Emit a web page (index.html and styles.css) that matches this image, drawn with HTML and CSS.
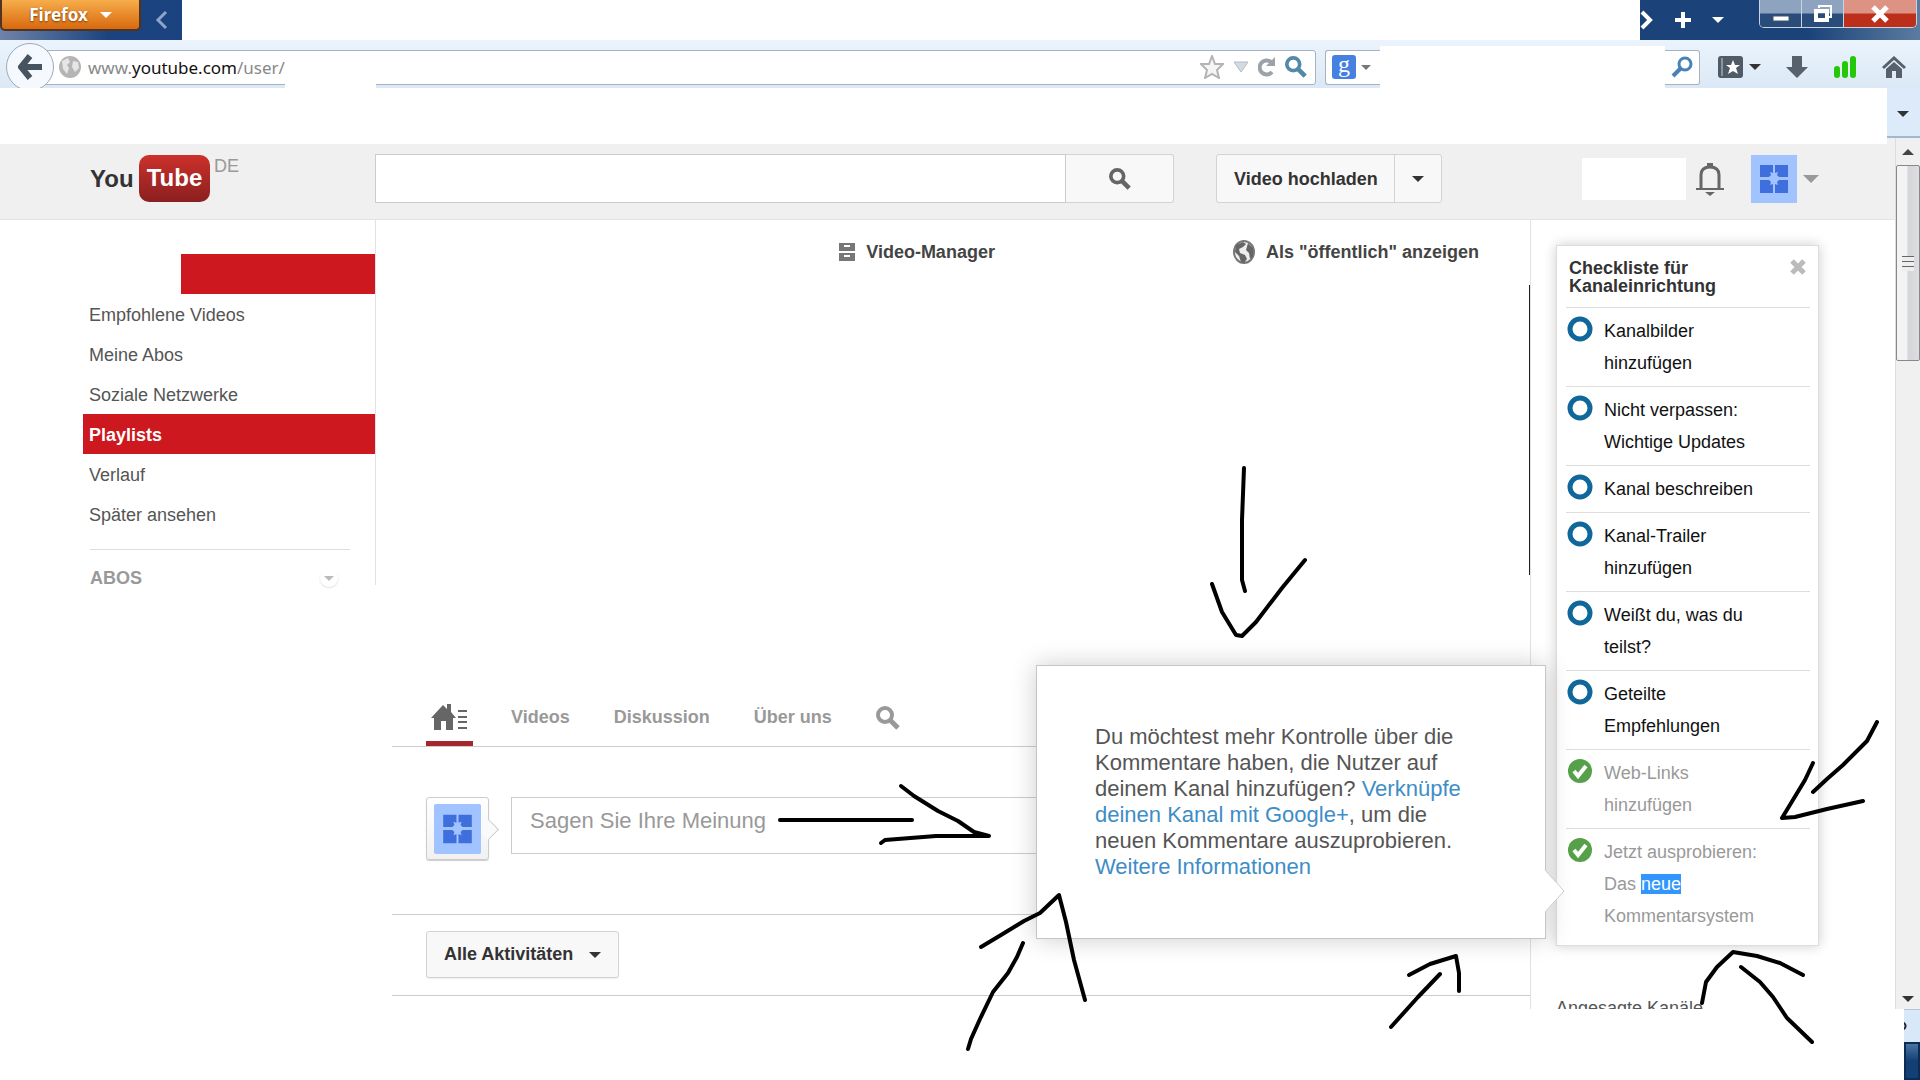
FILE: index.html
```html
<!DOCTYPE html>
<html lang="de">
<head>
  <meta charset="UTF-8" />
  <meta name="viewport" content="width=device-width, initial-scale=1" />
  <title>YouTube</title>
  <link rel="stylesheet" href="styles.css">
</head>
<body>
  <svg width="0" height="0" class="defs">
    <symbol id="avatar" viewBox="0 0 46 46">
      <rect width="46" height="46" fill="#a1c3ff"/>
      <path d="M9 9h13v8l-3-1 1 3-2 2H9zM24 9h13v12h-9l-2-2 1-3-3 1zM9 24h9l2 2-1 3 3-1v9H9zM37 24v13H24v-9l3 1-1-3 2-2z" fill="#3f6fdc"/>
    </symbol>
    <symbol id="glass" viewBox="0 0 24 24">
      <circle cx="9" cy="9" r="7" fill="none" stroke="currentColor" stroke-width="4"/>
      <path d="M14 14l8 8" stroke="currentColor" stroke-width="5"/>
    </symbol>
    <symbol id="ring" viewBox="0 0 26 26">
      <circle cx="13" cy="13" r="10" fill="#fff" stroke="#10679a" stroke-width="5"/>
    </symbol>
    <symbol id="check" viewBox="0 0 26 26">
      <circle cx="13" cy="13" r="12" fill="#55a048"/>
      <path d="M7 13l4 5 8-10" fill="none" stroke="#fff" stroke-width="4"/>
    </symbol>
  </svg>

  <div class="titlebar">
    <div class="titlebar-left">
      <button class="firefox">Firefox <span class="caret"></span></button>
      <button class="tab-prev" aria-label="Zurück">
        <svg width="14" height="20" viewBox="0 0 14 20"><path d="M11 2L3 10l8 8" fill="none" stroke="#8ba5cb" stroke-width="3"/></svg>
      </button>
    </div>
    <div class="titlebar-right">
      <button aria-label="Weiter"><svg width="14" height="20" viewBox="0 0 14 20"><path d="M2 2l8 8-8 8" fill="none" stroke="#fff" stroke-width="4"/></svg></button>
      <button aria-label="Neuer Tab"><svg width="18" height="18" viewBox="0 0 18 18"><path d="M9 1v16M1 9h16" stroke="#fff" stroke-width="4"/></svg></button>
      <button aria-label="Alle Tabs"><span class="caret"></span></button>
      <div class="window-buttons">
        <button class="win-min" aria-label="Minimieren"><svg width="18" height="24" viewBox="0 0 18 24"><path d="M1 14h16v5H1z" fill="#fff" stroke="#456"/></svg></button>
        <button class="win-max" aria-label="Verkleinern"><svg width="20" height="20" viewBox="0 0 20 20"><path d="M6 4V2h12v11h-3" fill="none" stroke="#fff" stroke-width="2"/><path d="M3 7h11v9H3z" fill="none" stroke="#fff" stroke-width="4"/></svg></button>
        <button class="win-close" aria-label="Schließen"><svg width="18" height="18" viewBox="0 0 18 18"><path d="M2 2l14 14M16 2L2 16" stroke="#fff" stroke-width="5"/></svg></button>
      </div>
    </div>
  </div>

  <div class="toolbar">
    <button class="back" aria-label="Zurück">
      <svg width="24" height="26" viewBox="0 0 24 26"><path d="M12 2L3 13l9 11M4 13h20" fill="none" stroke="#47535f" stroke-width="6"/></svg>
    </button>
    <div class="urlbar">
      <svg width="22" height="22" viewBox="0 0 22 22"><circle cx="11" cy="11" r="11" fill="#b5b5b5"/><path d="M3 5l6-3 2 4-3 3 2 3-2 6-4-5zM14 5l5 1 1 6-4 4-3-5z" fill="#e6e6e6"/></svg>
      <span class="url">www.<b>youtube.com</b>/user/g</span>
      <div class="url-icons">
        <svg width="24" height="24" viewBox="0 0 24 24"><path d="M12 1l3 8 8 0-6 6 2 8-7-4-7 4 2-8-6-6h8z" fill="#f5f5f5" stroke="#b4b4b4" stroke-width="2"/></svg>
        <svg width="16" height="12" viewBox="0 0 16 12"><path d="M1 1h14l-7 10z" fill="#d3dbe2" stroke="#b3bcc5"/></svg>
        <svg width="18" height="20" viewBox="0 0 18 20"><path d="M13 5a7 7 0 1 0 1 10" fill="none" stroke="#9aa2aa" stroke-width="4"/><path d="M17 0v9H8z" fill="#9aa2aa"/></svg>
        <svg class="go" width="22" height="22"><use href="#glass"/></svg>
      </div>
    </div>
    <div class="searchbar-left">
      <span class="google">g</span>
      <span class="caret"></span>
    </div>
    <div class="searchbar-blank"></div>
    <div class="searchbar-right">
      <svg width="22" height="22" viewBox="0 0 22 22"><circle cx="14" cy="8" r="6" fill="none" stroke="#4a80b5" stroke-width="3"/><path d="M10 12l-8 8" stroke="#4a80b5" stroke-width="4"/></svg>
    </div>
    <div class="tools">
      <button class="marks" aria-label="Lesezeichen">
        <svg width="25" height="22" viewBox="0 0 25 22"><rect width="25" height="22" rx="3" fill="#4f5b67"/><path d="M4 2v18" stroke="#8a949e" stroke-width="2"/><path d="M15 4l2 5h5l-4 3 2 6-5-3-5 3 2-6-4-3h5z" fill="#fff"/></svg>
        <span class="caret"></span>
      </button>
      <svg width="22" height="22" viewBox="0 0 22 22"><path d="M6 0h10v11h6L11 22 0 11h6z" fill="#56616d"/></svg>
      <svg width="24" height="24" viewBox="0 0 24 24"><path d="M4 14v6M12 9v11M20 4v16" stroke="#25c808" stroke-width="6" stroke-linecap="round"/></svg>
      <svg width="24" height="22" viewBox="0 0 24 22"><path d="M1 12L12 2l11 10" fill="none" stroke="#56616d" stroke-width="3"/><path d="M4 13l8-7 8 7v9h-6v-7h-4v7H4z" fill="#56616d"/></svg>
    </div>
  </div>

  <div class="bookmarks"><button aria-label="Weitere Lesezeichen"><span class="caret"></span></button></div>

  <div class="viewport">
    <div class="page">
      <header class="masthead">
        <a class="logo" href="#"><span>You</span><span class="tube">Tube</span></a>
        <span class="country">DE</span>
        <form class="search">
          <input type="text" aria-label="Suchen">
          <button type="button" aria-label="Suchen"><svg width="22" height="22"><use href="#glass"/></svg></button>
        </form>
        <div class="upload">
          <button>Video hochladen</button>
          <button class="upload-more" aria-label="Mehr"><span class="caret"></span></button>
        </div>
        <div class="account">
          <div class="name"></div>
          <svg width="28" height="34" viewBox="0 0 28 34"><path d="M5 27V13q0-8 9-8t9 8v14" fill="none" stroke="#666" stroke-width="3"/><path d="M0 26h28v2H0zM9 30h10l-5 4zM11 1h6v5h-6z" fill="#666"/></svg>
          <svg class="avatar" width="46" height="48"><use href="#avatar"/></svg>
          <span class="caret"></span>
        </div>
      </header>

      <div class="columns">
        <nav class="guide">
          <div class="guide-user"></div>
          <a href="#">Empfohlene Videos</a>
          <a href="#">Meine Abos</a>
          <a href="#">Soziale Netzwerke</a>
          <a href="#" class="active">Playlists</a>
          <a href="#">Verlauf</a>
          <a href="#">Später ansehen</a>
          <div class="guide-subs">ABOS <button aria-label="Sortieren"><span class="caret"></span></button></div>
        </nav>

        <main class="channel">
          <div class="channel-links">
            <a href="#"><svg width="16" height="18" viewBox="0 0 16 18"><path d="M0 0h16v8H0zM0 10h16v8H0z" fill="#777"/><path d="M5 2h6v2H5zM5 12h6v2H5z" fill="#fff"/></svg>Video-Manager</a>
            <a href="#"><svg width="22" height="24" viewBox="0 0 22 24"><ellipse cx="11" cy="12" rx="10" ry="11" fill="#eee" stroke="#777" stroke-width="2"/><path d="M3 5l7-3 3 2-3 3-4 2 1 4 5 2 2 4-3 4-3-1-2-6-4-4zM15 3l5 5v9l-3 2-1-6-3-3z" fill="#666"/></svg>Als "öffentlich" anzeigen</a>
          </div>
          <div class="banner"></div>
          <nav class="tabs">
            <a href="#" class="home" aria-label="Startseite"><svg width="36" height="26" viewBox="0 0 36 26"><path d="M0 14L12 1l4 4V0h4v8l5 6h-3v12h-7v-9h-5v9H3V14z" fill="#666"/><path d="M27 7h9M27 13h9M27 18h9M27 24h9" stroke="#666" stroke-width="2"/></svg></a>
            <a href="#">Videos</a>
            <a href="#">Diskussion</a>
            <a href="#">Über uns</a>
            <a href="#" aria-label="Suchen"><svg width="24" height="24"><use href="#glass"/></svg></a>
          </nav>
          <div class="composer">
            <div class="composer-avatar"><svg width="47" height="50"><use href="#avatar"/></svg></div>
            <input type="text" placeholder="Sagen Sie Ihre Meinung" aria-label="Kommentar">
          </div>
          <div class="filter">
            <button>Alle Aktivitäten <span class="caret"></span></button>
          </div>
        </main>

        <aside class="side">
          <div class="checklist">
            <div class="checklist-head">
              <h2>Checkliste für Kanaleinrichtung</h2>
              <button aria-label="Schließen"><svg width="16" height="16" viewBox="0 0 16 16"><path d="M2 2l12 12M14 2L2 14" stroke="#bbb" stroke-width="5"/></svg></button>
            </div>
            <ul>
              <li><svg><use href="#ring"/></svg><span>Kanalbilder hinzufügen</span></li>
              <li><svg><use href="#ring"/></svg><span>Nicht verpassen: Wichtige Updates</span></li>
              <li><svg><use href="#ring"/></svg><span>Kanal beschreiben</span></li>
              <li><svg><use href="#ring"/></svg><span>Kanal-Trailer hinzufügen</span></li>
              <li><svg><use href="#ring"/></svg><span>Weißt du, was du teilst?</span></li>
              <li><svg><use href="#ring"/></svg><span>Geteilte Empfehlungen</span></li>
              <li class="done"><svg><use href="#check"/></svg><span>Web-Links hinzufügen</span></li>
              <li class="done"><svg><use href="#check"/></svg><span>Jetzt ausprobieren: Das <mark>neue</mark> Kommentarsystem</span></li>
            </ul>
            <div class="popover">
              <p>Du möchtest mehr Kontrolle über die Kommentare haben, die Nutzer auf deinem Kanal hinzufügen? <a href="#">Verknüpfe deinen Kanal mit Google+</a>, um die neuen Kommentare auszuprobieren. <a href="#">Weitere Informationen</a></p>
              <svg class="popover-arrow" width="20" height="42" viewBox="0 0 20 42"><path d="M0 0l19 21L0 42" fill="#fff" stroke="#ccc"/></svg>
            </div>
          </div>
          <h3>Angesagte Kanäle</h3>
        </aside>
      </div>
    </div>

    <div class="scrollbar">
      <button aria-label="Nach oben"><span class="caret up"></span></button>
      <div class="thumb"></div>
      <button aria-label="Nach unten"><span class="caret"></span></button>
    </div>
  </div>

  <div class="bottom">
    <div class="bottom-corner">
      <div class="addon"></div>
      <div class="taskbar"></div>
    </div>
  </div>

  <!-- hand-drawn arrows -->
  <svg class="arrows" viewBox="0 0 1920 1080">
    <path d="M1244 468L1242 520V580L1245 591"/>
    <path d="M1212 584L1222 612L1236 635L1242 636L1256 622L1282 588L1305 560"/>
    <path d="M780 820H912"/>
    <path d="M901 786L914 796L938 811L958 821L974 832L989 836L936 836L885 840L881 843"/>
    <path d="M968 1049L971 1039L980 1019L993 992L1008 973L1017 957L1023 943"/>
    <path d="M981 947L1001 935L1024 921L1040 913L1059 895L1066 922L1074 960L1085 1000"/>
    <path d="M1391 1027L1418 997L1440 974"/>
    <path d="M1409 975L1430 964L1456 956L1459 973V991"/>
    <path d="M1877 722L1867 741L1843 765L1827 779L1813 792"/>
    <path d="M1813 763L1805 780L1782 818L1795 817L1827 809L1863 801"/>
    <path d="M1702 1003L1706 982L1717 967L1733 952L1757 956L1780 963L1803 975"/>
    <path d="M1741 967L1760 982L1773 997L1787 1018L1812 1042"/>
  </svg>
</body>
</html>
```
FILE: styles.css
```css
* {
  box-sizing: border-box;
}

body {
  margin: 0;
  min-height: 100vh;
  display: flex;
  flex-direction: column;
  position: relative;
  background: #fff;
  font-family: "Liberation Sans", Arial, sans-serif;
  font-size: 18px;
  color: #333;
  overflow: hidden;
}

button {
  font: inherit;
  color: inherit;
  background: none;
  border: none;
  padding: 0;
  display: flex;
  align-items: center;
  justify-content: center;
}

a {
  color: inherit;
  text-decoration: none;
}

svg {
  flex: none;
}

.defs {
  position: absolute;
}

.caret {
  border: 6px solid transparent;
  border-top-color: currentColor;
  border-bottom: none;
}

.caret.up {
  border-top: none;
  border-bottom: 6px solid #444;
}

/* browser window */
.titlebar {
  display: flex;
  justify-content: space-between;
  height: 40px;
}

.titlebar-left {
  display: flex;
  align-items: flex-start;
  width: 182px;
  background: linear-gradient(to right, #6f83a8, #1b437f 60%);
}

.firefox {
  width: 141px;
  height: 31px;
  gap: 12px;
  color: #fff;
  font-family: "Noto Sans", sans-serif;
  font-size: 17px;
  font-weight: bold;
  text-shadow: 0 1px 2px #7a3c00;
  background: linear-gradient(#f6ad4b, #d9690e);
  border: 2px solid #4f3422;
  border-top: none;
  border-radius: 0 0 5px 5px;
}

.tab-prev {
  width: 41px;
  height: 40px;
}

.titlebar-right {
  display: flex;
  width: 280px;
  gap: 20px;
  color: #fff;
  background: linear-gradient(to right, #1b437a 60%, #5b7ca0);
}

.window-buttons {
  display: flex;
  height: 28px;
  margin-left: auto;
  margin-right: 3px;
  border: 1px solid #c9d4e2;
  border-top: none;
  border-radius: 0 0 5px 5px;
  overflow: hidden;
}

.window-buttons button {
  width: 42px;
  border-right: 1px solid #c9d4e2;
  background: linear-gradient(#8ea3bf 48%, #2a4c7b 52%);
}

.window-buttons .win-close {
  width: 72px;
  border-right: none;
  background: linear-gradient(#dd9284 48%, #bb2f1b 52%);
}

.toolbar {
  display: flex;
  align-items: center;
  height: 48px;
  padding: 6px 14px 0 6px;
  background: linear-gradient(#ebf4fd, #dbe8f5);
  overflow: hidden;
}

.back {
  flex: none;
  width: 48px;
  height: 48px;
  z-index: 1;
  background: #f5f9fe;
  border: 1px solid #9babbd;
  border-radius: 50%;
}

.urlbar {
  position: relative;
  display: flex;
  align-items: center;
  flex: 1;
  height: 35px;
  margin-left: -14px;
  padding: 0 8px 0 18px;
  background: #fff;
  border: 1px solid #a5b3c2;
  border-radius: 3px;
}

/* blanked-out part of the address */
.urlbar::after {
  content: "";
  position: absolute;
  left: 244px;
  top: 2px;
  width: 91px;
  height: 40px;
  background: #fff;
}

.url {
  margin-left: 7px;
  font-family: "Noto Sans", sans-serif;
  font-size: 17px;
  color: #888;
}

.url b {
  font-weight: normal;
  color: #111;
}

.url-icons {
  display: flex;
  align-items: center;
  gap: 9px;
  margin-left: auto;
}

.go {
  color: #5289a8;
}

.searchbar-left,
.searchbar-right {
  display: flex;
  align-items: center;
  height: 35px;
  background: #fff;
  border: 1px solid #a5b3c2;
}

.searchbar-left {
  gap: 5px;
  width: 55px;
  margin-left: 9px;
  padding-left: 6px;
  border-right: none;
  border-radius: 3px 0 0 3px;
  color: #777;
}

.searchbar-left .caret {
  border-width: 5px 5px 0;
}

.google {
  width: 24px;
  height: 24px;
  border-radius: 3px;
  background: #4680e0;
  color: #fff;
  font-family: "Liberation Serif", serif;
  font-size: 24px;
  line-height: 18px;
  text-align: center;
}

.searchbar-blank {
  width: 285px;
  height: 43px;
  background: #fff;
}

.searchbar-right {
  width: 35px;
  padding-left: 6px;
  border-left: none;
  border-radius: 0 3px 3px 0;
}

.tools {
  display: flex;
  align-items: center;
  justify-content: space-between;
  width: 188px;
  margin-left: 18px;
  color: #333;
}

.marks {
  gap: 6px;
}

.bookmarks {
  display: flex;
  justify-content: flex-end;
  height: 50px;
}

.bookmarks button {
  width: 33px;
  padding: 4px 2px 0 0;
  background: #dceafa;
  border-bottom: 2px solid #a0b8d4;
}

.viewport {
  display: flex;
  flex: 1;
}

.page {
  display: flex;
  flex-direction: column;
  flex: 1;
}

.scrollbar {
  display: flex;
  flex-direction: column;
  width: 25px;
  background: #f0f0f0;
  border-left: 1px solid #ddd;
}

.scrollbar button {
  height: 27px;
}

.scrollbar button:last-child {
  height: 20px;
  margin-top: auto;
}

.thumb {
  height: 196px;
  background:
    repeating-linear-gradient(#666 0 1px, #eee 1px 5px) center / 12px 15px no-repeat,
    linear-gradient(to right, #f3f3f3 45%, #d3d5d8 50%, #dcdee0);
  border: 1px solid #888;
  border-radius: 2px;
}

.bottom {
  display: flex;
  justify-content: flex-end;
  height: 71px;
}

.bottom-corner {
  width: 16px;
  overflow: hidden;
}

.addon {
  height: 33px;
  border-top: 1px solid #b5c5d8;
  background: radial-gradient(ellipse at -4px 16px, transparent 4px, #223 5px 6px, transparent 7px) no-repeat #d9e8f8;
}

.taskbar {
  height: 38px;
  border: 2px solid #0b2c55;
  background: linear-gradient(#4a74a3, #143f74 50%);
}

/* youtube header */
.masthead {
  display: flex;
  align-items: center;
  height: 82px;
  padding: 0 76px 0 90px;
  border-bottom: 1px solid #e3e3e3;
  background: linear-gradient(#fff, #fff) 0 0 / calc(100% - 8px) 6px no-repeat #f0f0f0;
}

.logo {
  display: flex;
  align-items: center;
  justify-content: space-between;
  width: 120px;
  font-size: 24px;
  font-weight: bold;
}

.tube {
  width: 71px;
  height: 47px;
  line-height: 46px;
  text-align: center;
  color: #fff;
  background: linear-gradient(#cc312b, #8a1f1f);
  border-radius: 10px;
}

.country {
  align-self: flex-start;
  width: 165px;
  padding: 18px 0 0 4px;
  color: #999;
}

.search {
  display: flex;
  flex: 0 1 799px;
  height: 49px;
}

.search input {
  flex: 1;
  min-width: 0;
  padding: 0 12px;
  font: inherit;
  border: 1px solid #ccc;
  background: #fff;
}

.search button,
.upload,
.filter button {
  background: #f8f8f8;
  border: 1px solid #d3d3d3;
  border-radius: 3px;
}

.search button {
  width: 108px;
  color: #666;
  border-left: none;
  border-radius: 0 3px 3px 0;
}

.upload {
  display: flex;
  height: 49px;
  margin-left: 42px;
  font-weight: bold;
}

.upload button {
  padding: 2px 16px 0 17px;
}

.upload .upload-more {
  width: 47px;
  padding: 0;
  border-left: 1px solid #d3d3d3;
}

.account {
  display: flex;
  align-items: center;
  margin-left: auto;
  color: #999;
}

.account .caret {
  border-width: 8px 8px 0;
}

.name {
  width: 104px;
  height: 42px;
  margin-right: 10px;
  background: #fff;
}

.avatar {
  margin: 0 6px 0 27px;
  background: #a1c3ff;
}

/* columns */
.columns {
  display: flex;
  align-items: flex-start;
  flex: 1;
}

.guide {
  width: 376px;
  height: 365px;
  padding: 34px 0 0 83px;
  border-right: 1px solid #e2e2e2;
  color: #555;
}

.guide a {
  display: block;
  height: 40px;
  padding-left: 6px;
  line-height: 42px;
}

.guide .active {
  background: #cc181e;
  color: #fff;
  font-weight: bold;
}

.guide-user {
  height: 40px;
  margin-left: 98px;
  background: #cc181e;
}

.guide-subs {
  display: flex;
  align-items: center;
  justify-content: space-between;
  height: 57px;
  margin: 15px 25px 0 7px;
  padding-right: 12px;
  border-top: 1px solid #ddd;
  color: #999;
  font-weight: bold;
}

.guide-subs button {
  width: 18px;
  height: 18px;
  border-radius: 50%;
  box-shadow: 0 1px 2px #ddd;
  color: #bbb;
}

.guide-subs .caret {
  border-width: 5px 5px 0;
}

.channel {
  flex: 1;
  align-self: stretch;
  border-right: 1px solid #e2e2e2;
}

.channel-links {
  display: flex;
  justify-content: flex-end;
  gap: 238px;
  height: 65px;
  padding: 20px 51px 0 0;
  font-weight: bold;
  color: #444;
}

.channel-links a {
  display: flex;
  align-items: center;
  gap: 11px;
  height: 24px;
}

.banner {
  height: 290px;
  border-right: 1px solid #222;
}

.tabs {
  display: flex;
  margin: 110px 0 0 16px;
  padding-left: 34px;
  border-bottom: 1px solid #ccc;
  font-weight: bold;
  color: #999;
}

.tabs a {
  display: flex;
  align-items: center;
  height: 61px;
  padding: 4px 22px 0;
}

.tabs .home {
  width: 47px;
  margin-right: 16px;
  padding: 8px 5px 0;
  border-bottom: 5px solid #a5272c;
}

.composer {
  display: flex;
  height: 168px;
  margin-left: 16px;
  padding: 50px 30px 0 34px;
  border-bottom: 1px solid #ccc;
}

.composer-avatar {
  position: relative;
  display: flex;
  align-items: center;
  justify-content: center;
  width: 63px;
  height: 63px;
  margin-right: 22px;
  border: 1px solid #ccc;
  border-radius: 3px;
  background: linear-gradient(#fff, #f1f1f1);
  box-shadow: 0 1px 1px #ccc;
}

.composer-avatar svg {
  z-index: 1;
  border-radius: 2px;
  background: #a1c3ff;
}

.composer-avatar::after {
  content: "";
  position: absolute;
  right: -8px;
  top: 24px;
  width: 14px;
  height: 14px;
  background: #fafafa;
  border: 1px solid #ccc;
  border-width: 1px 1px 0 0;
  transform: rotate(45deg);
}

.composer input {
  flex: 1;
  height: 57px;
  padding: 0 18px 10px;
  border: 1px solid #ccc;
  font: inherit;
  font-size: 22px;
}

.composer input::placeholder {
  color: #999;
}

.filter {
  height: 81px;
  margin-left: 16px;
  padding: 16px 34px;
  border-bottom: 1px solid #ccc;
}

.filter button {
  gap: 16px;
  height: 47px;
  padding: 0 17px;
  font-weight: bold;
  box-shadow: 0 1px 1px #eee;
}

.side {
  width: 364px;
  height: 789px;
  padding: 25px 76px 0 25px;
  clip-path: inset(0 0 0 -600px);
}

.side h3 {
  margin: 52px 0 0;
  font-size: 18px;
  font-weight: normal;
  color: #555;
}

.checklist {
  position: relative;
  padding: 13px 8px 13px 9px;
  background: #fff;
  border: 1px solid #ddd;
  box-shadow: 0 0 12px rgba(0, 0, 0, 0.2);
}

.checklist-head {
  display: flex;
  align-items: flex-start;
  justify-content: space-between;
  padding: 0 4px 12px 3px;
}

.checklist h2 {
  width: 160px;
  margin: 0;
  font-size: 18px;
  line-height: 18px;
}

.checklist ul {
  margin: 0;
  padding: 0;
  list-style: none;
}

.checklist li {
  display: flex;
  align-items: flex-start;
  gap: 11px;
  padding: 7px 0 7px 1px;
  border-top: 1px solid #ddd;
  line-height: 32px;
  color: #111;
}

.checklist li:last-child {
  padding-bottom: 0;
}

.checklist li svg {
  width: 26px;
  height: 26px;
  margin-top: 1px;
}

.checklist li span {
  max-width: 160px;
}

.checklist .done {
  color: #999;
}

mark {
  background: #3297fd;
  color: #fff;
}

.popover {
  position: absolute;
  right: calc(100% + 11px);
  bottom: 6px;
  width: 510px;
  height: 274px;
  padding: 58px 80px 0 58px;
  background: #fff;
  border: 1px solid #c5c5c5;
  box-shadow: 0 0 24px rgba(0, 0, 0, 0.2);
}

.popover p {
  margin: 0;
  font-size: 22px;
  line-height: 26px;
  color: #555;
}

.popover a {
  color: #3e8dc5;
}

.popover-arrow {
  position: absolute;
  left: 100%;
  bottom: 26px;
}

.arrows {
  position: absolute;
  top: 0;
  left: 0;
  width: 100%;
  pointer-events: none;
}

.arrows path {
  fill: none;
  stroke: #000;
  stroke-width: 4;
  stroke-linecap: round;
  stroke-linejoin: round;
}
```
